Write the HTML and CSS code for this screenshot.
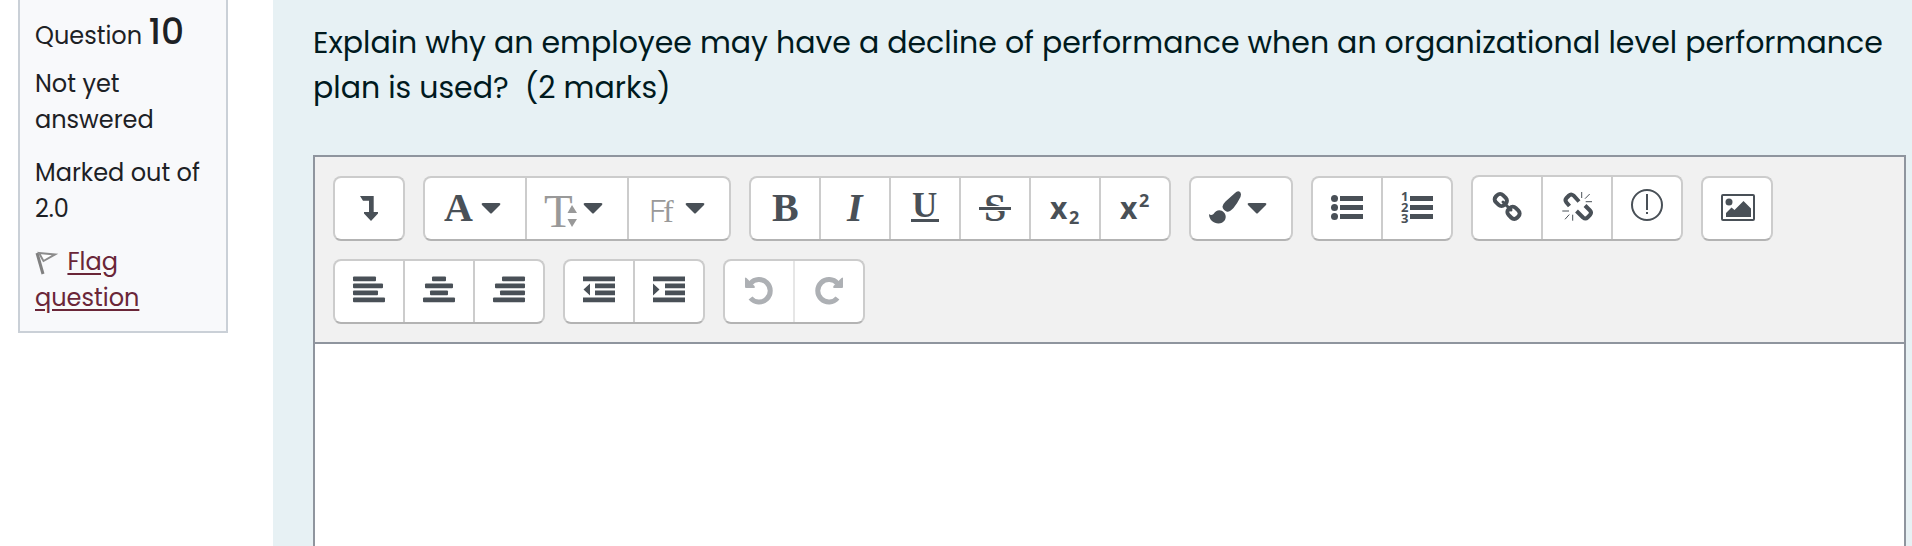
FILE: index.html
```html
<!DOCTYPE html>
<html lang="en">
<head>
  <meta charset="UTF-8">
  <meta name="viewport" content="width=device-width, initial-scale=1">
  <title>Question 10</title>
  <link rel="stylesheet" href="styles.css">
</head>
<body>

  <div class="question">
    <aside class="info">
      <h3 class="number">Question <strong>10</strong></h3>
      <div class="state">Not yet answered</div>
      <div class="grade">Marked out of 2.0</div>
      <div class="flag">
        <svg class="flag-icon" viewBox="0 0 24 24" aria-hidden="true">
          <path d="M2 2l6 21" stroke="#808080" stroke-width="3"/>
          <path d="M4 2l16 1.500L8.500 10z" fill="#fff" stroke="#8c8c8c" stroke-width="2"/>
        </svg>
        <a href="#">Flag question</a>
      </div>
    </aside>

    <main class="content">
      <p class="qtext" id="qtext">Explain why an employee may have a decline of performance when an organizational level performance plan is used?&nbsp; (2 marks)</p>

      <div class="editor">
        <div class="toolbar" role="toolbar" aria-label="Editor">
          <div class="group">
            <button type="button" aria-label="Show more buttons">
              <svg class="icon" viewBox="0 0 40 41"><path d="M11 8h13.700v16H29v1.500L22 33l-7-7.500V24h5V12.700h-6z"/></svg>
            </button>
          </div>

          <div class="group wide">
            <button type="button" aria-label="Paragraph styles">
              <svg class="icon" viewBox="0 0 64 41"><text class="serif bold" x="1" y="33">A</text><path d="M40 15h16q2 0 1 2l-8 8q-1 1-2 0l-8-8q-1-2 1-2z"/></svg>
            </button>
            <button type="button" aria-label="Font size">
              <svg class="icon" viewBox="0 0 64 41"><g class="grey"><text class="serif size" x="-1" y="39">T</text><path class="gap" d="M20 18h13v22H22z"/><path d="M22.500 25L27 17l5 8zM22.500 31H32l-5 8z"/></g><path d="M40 15h16q2 0 1 2l-8 8q-1 1-2 0l-8-8q-1-2 1-2z"/></svg>
            </button>
            <button type="button" aria-label="Font family">
              <svg class="icon" viewBox="0 0 64 41"><g class="grey"><text class="sans-light" x="2" y="34">F</text><text class="serif family" x="16" y="34">f</text></g><path d="M40 15h16q2 0 1 2l-8 8q-1 1-2 0l-8-8q-1-2 1-2z"/></svg>
            </button>
          </div>

          <div class="group">
            <button type="button" aria-label="Bold">
              <svg class="icon" viewBox="0 0 40 41"><text class="serif bold" x="7" y="33">B</text></svg>
            </button>
            <button type="button" aria-label="Italic">
              <svg class="icon" viewBox="0 0 40 41"><text class="serif bold italic" x="12" y="33">I</text></svg>
            </button>
            <button type="button" aria-label="Underline">
              <svg class="icon" viewBox="0 0 40 41"><text class="serif bold under" x="7" y="29">U</text><path d="M6 31h28v3H6z"/></svg>
            </button>
            <button type="button" aria-label="Strike through">
              <svg class="icon" viewBox="0 0 40 41"><text class="serif bold" x="9" y="33">S</text><path class="gap" d="M4 18h32v5H4z"/><path d="M4 19h32v3H4z"/></svg>
            </button>
            <button type="button" aria-label="Subscript">
              <svg class="icon" viewBox="0 0 40 41"><text class="sans" x="5" y="31">x</text><text class="sans small" x="24" y="36">2</text></svg>
            </button>
            <button type="button" aria-label="Superscript">
              <svg class="icon" viewBox="0 0 40 41"><text class="sans" x="5" y="31">x</text><text class="sans small" x="24" y="19">2</text></svg>
            </button>
          </div>

          <div class="group wide">
            <button type="button" aria-label="Font colour">
              <svg class="icon" viewBox="0 0 64 41"><path d="M26 5q3-3 5.500-.5 1 1.500 0 4.500-3 6-7 11-4 4.500-7 3.500-4-2-4-5 0-2 3-5zM0 26q2 2 4.500 0C7 21.500 12 21 15 24.500c3 3.500 2 8-2 10.200C8 37 0 34 0 26z"/><path d="M40 15h16q2 0 1 2l-8 8q-1 1-2 0l-8-8q-1-2 1-2z"/></svg>
            </button>
          </div>

          <div class="group">
            <button type="button" aria-label="Unordered list">
              <svg class="icon" viewBox="0 0 40 41"><circle cx="7.500" cy="10.500" r="3.500"/><circle cx="7.500" cy="19.500" r="3.500"/><circle cx="7.500" cy="28.500" r="3.500"/><path d="M13 8h23v5H13zM13 17h23v5H13zM13 26h23v5H13z"/></svg>
            </button>
            <button type="button" aria-label="Ordered list">
              <svg class="icon" viewBox="0 0 40 41"><text class="sans digit" x="4" y="13">1</text><text class="sans digit" x="4" y="24">2</text><text class="sans digit" x="4" y="35">3</text><path d="M13 8h23v5H13zM13 17h23v5H13zM13 26h23v5H13z"/></svg>
            </button>
          </div>

          <div class="group tall">
            <button type="button" aria-label="Link">
              <svg class="icon" viewBox="0 0 40 41"><g class="line link"><rect x="-6" y="-5" width="12" height="10" rx="4" transform="translate(13.800 12) rotate(45)"/><rect x="-6" y="-5" width="12" height="10" rx="4" transform="translate(26.500 24.800) rotate(45)"/></g><path class="line join" d="M16 14l8 8"/></svg>
            </button>
            <button type="button" aria-label="Unlink">
              <svg class="icon" viewBox="0 0 40 41"><path class="line chain" d="M12.500 18l-3-3.500q-2-2.500 0-4.500l2.500-2.500q2-2 4.500 0l5.500 6M19.500 23l6.500 6.500q2.500 2 4.500 0l2.500-2.500q2-2.500 0-4.500l-5-5"/><path class="line thin" d="M24.700 4v6M32.700 6L28 10.700M28.700 13.700H35M5.300 23H12M12.300 26.500L8 31.300M15.700 26.700v6"/></svg>
            </button>
            <button type="button" aria-label="Prevent automatic linking">
              <svg class="icon" viewBox="0 0 40 41"><circle class="line ring" cx="20" cy="17" r="15"/><path d="M19 6h2v16h-2zM19 24h2v2h-2z"/></svg>
            </button>
          </div>

          <div class="group">
            <button type="button" aria-label="Image">
              <svg class="icon" viewBox="0 0 40 41"><rect class="line ring" x="5" y="7" width="32" height="25" rx="1"/><circle cx="12" cy="14" r="3.500"/><path d="M9 29v-4l5.500-5.500 3 2.500 9-9 7.500 7.500V29z"/></svg>
            </button>
          </div>

          <div class="group">
            <button type="button" aria-label="Left align">
              <svg class="icon" viewBox="0 0 40 41"><rect x="4" y="5.500" width="23" height="4.800" rx="1"/><rect x="4" y="12.500" width="30" height="4.800" rx="1"/><rect x="4" y="19.500" width="25" height="4.800" rx="1"/><rect x="4" y="26.500" width="32" height="4.800" rx="1"/></svg>
            </button>
            <button type="button" aria-label="Center">
              <svg class="icon" viewBox="0 0 40 41"><rect x="13" y="5.500" width="14" height="4.800" rx="1"/><rect x="6" y="12.500" width="28" height="4.800" rx="1"/><rect x="11" y="19.500" width="18" height="4.800" rx="1"/><rect x="4" y="26.500" width="32" height="4.800" rx="1"/></svg>
            </button>
            <button type="button" aria-label="Right align">
              <svg class="icon" viewBox="0 0 40 41"><rect x="13" y="5.500" width="23" height="4.800" rx="1"/><rect x="6" y="12.500" width="30" height="4.800" rx="1"/><rect x="11" y="19.500" width="25" height="4.800" rx="1"/><rect x="4" y="26.500" width="32" height="4.800" rx="1"/></svg>
            </button>
          </div>

          <div class="group">
            <button type="button" aria-label="Outdent">
              <svg class="icon" viewBox="0 0 40 41"><path d="M4 5.500h32v4.800H4zM16 12.500h20v4.800H16zM16 19.500h20v4.800H16zM4 26.500h32v4.800H4zM11 12.500v12L4.500 18.500z"/></svg>
            </button>
            <button type="button" aria-label="Indent">
              <svg class="icon" viewBox="0 0 40 41"><path d="M4 5.500h32v4.800H4zM16 12.500h20v4.800H16zM16 19.500h20v4.800H16zM4 26.500h32v4.800H4zM4 12.500v12l6.500-6z"/></svg>
            </button>
          </div>

          <div class="group history">
            <button type="button" aria-label="Undo" disabled>
              <svg class="icon" viewBox="0 0 40 41"><path class="line turn" d="M11.500 12.500A11.200 11.200 0 1 1 11.500 27"/><path d="M6 7.500q0-1.800 1.500-.5l8 8q1 2-1 2H7q-1 0-1-1z"/></svg>
            </button>
            <button type="button" aria-label="Redo" disabled>
              <svg class="icon" viewBox="0 0 40 41"><path class="line turn" d="M28.500 12.500A11.200 11.200 0 1 0 28.500 27"/><path d="M34 7.500q0-1.800-1.500-.5l-8 8q-1 2 1 2H33q1 0 1-1z"/></svg>
            </button>
          </div>
        </div>
        <textarea class="answer" aria-labelledby="qtext"></textarea>
      </div>
    </main>
  </div>

</body>
</html>
```

FILE: styles.css
```css
* {
  box-sizing: border-box;
}

body {
  margin: 0;
  background-color: #fff;
  color: #1d2125;
  font-family: Poppins, Inter, sans-serif;
  font-size: 24px;
  line-height: 36px;
}

.question {
  display: flex;
  align-items: flex-start;
  min-height: 100vh;
  padding-left: 18px;
}

/* Question info box */
.info {
  flex: 0 0 210px;
  margin-right: 45px;
  padding: 10px 15px 15px;
  background-color: #f8f9fb;
  border: 2px solid #cad0d7;
  border-top: none;
}

.number {
  margin: 0;
  font-size: 24px;
  font-weight: 400;
  line-height: 44px;
}

.number strong {
  font-size: 36px;
  font-weight: 500;
}

.state {
  margin-top: 8px;
}

.grade,
.flag {
  margin-top: 17px;
}

.flag-icon {
  width: 24px;
  height: 24px;
  margin-right: 2px;
  fill: none;
  vertical-align: -5px;
}

.flag a {
  color: #6a2638;
  text-underline-offset: 3px;
}

/* Question text and answer */
.content {
  display: flex;
  flex: 1;
  flex-direction: column;
  align-self: stretch;
  min-width: 0;
  padding: 20px 6px 0 40px;
  background-color: #e7f1f4;
  color: #001a1e;
}

.qtext {
  margin: 0 0 45px;
  font-size: 30px;
  line-height: 45px;
}

.editor {
  display: flex;
  flex: 1;
  flex-direction: column;
  border: 2px solid #8f959e;
  border-bottom: none;
}

.toolbar {
  display: flex;
  flex-wrap: wrap;
  align-items: flex-end;
  gap: 18px;
  padding: 18px;
  background-color: #f1f1f1;
  border-bottom: 2px solid #8f959e;
}

.group {
  display: flex;
  height: 65px;
  overflow: hidden;
  background-color: #fff;
  border: 2px solid #ccc;
  border-bottom-color: #b3b3b3;
  border-radius: 8px;
}

.group.tall {
  height: 66px;
}

.group button {
  display: flex;
  align-items: flex-end;
  justify-content: center;
  width: 68px;
  padding: 0 0 10px;
  background: none;
  border: none;
  color: #495057;
  cursor: pointer;
}

.group button + button {
  width: 70px;
  border-left: 2px solid #ccc;
}

.group.wide button {
  width: 100px;
}

.group.wide button + button {
  width: 102px;
}

.group.history button + button {
  border-left-color: #e6e6e6;
}

.group button:disabled {
  color: #adb0b4;
  cursor: default;
}

.answer {
  flex: 1;
  width: 100%;
  padding: 12px;
  background-color: #fff;
  border: none;
  font: inherit;
  outline: none;
  resize: none;
}

/* Toolbar icons */
.icon {
  width: 40px;
  height: 41px;
  overflow: visible;
  fill: currentColor;
}

.wide .icon {
  width: 64px;
}

.icon .grey {
  fill: #999;
}

.icon .gap {
  fill: #fff;
}

.icon .serif {
  font-family: "Liberation Serif", serif;
  font-size: 40px;
}

.icon .bold {
  font-weight: 700;
}

.icon .italic {
  font-style: italic;
}

.icon .under {
  font-size: 35px;
}

.icon .size {
  font-size: 47px;
}

.icon .family {
  font-size: 32px;
}

.icon .sans-light {
  font-family: Roboto, sans-serif;
  font-size: 31px;
  font-weight: 300;
}

.icon .sans {
  font-family: "Noto Sans", sans-serif;
  font-size: 30px;
  font-weight: 700;
}

.icon .small {
  font-size: 18px;
}

.icon .digit {
  font-size: 13px;
}

.line {
  fill: none;
  stroke: currentColor;
}

.ring {
  stroke-width: 2;
}

.link,
.chain {
  stroke-width: 4;
}

.join {
  stroke-width: 3;
  stroke-linecap: round;
}

.thin {
  stroke-width: 1;
}

.turn {
  stroke-width: 5;
}
```
